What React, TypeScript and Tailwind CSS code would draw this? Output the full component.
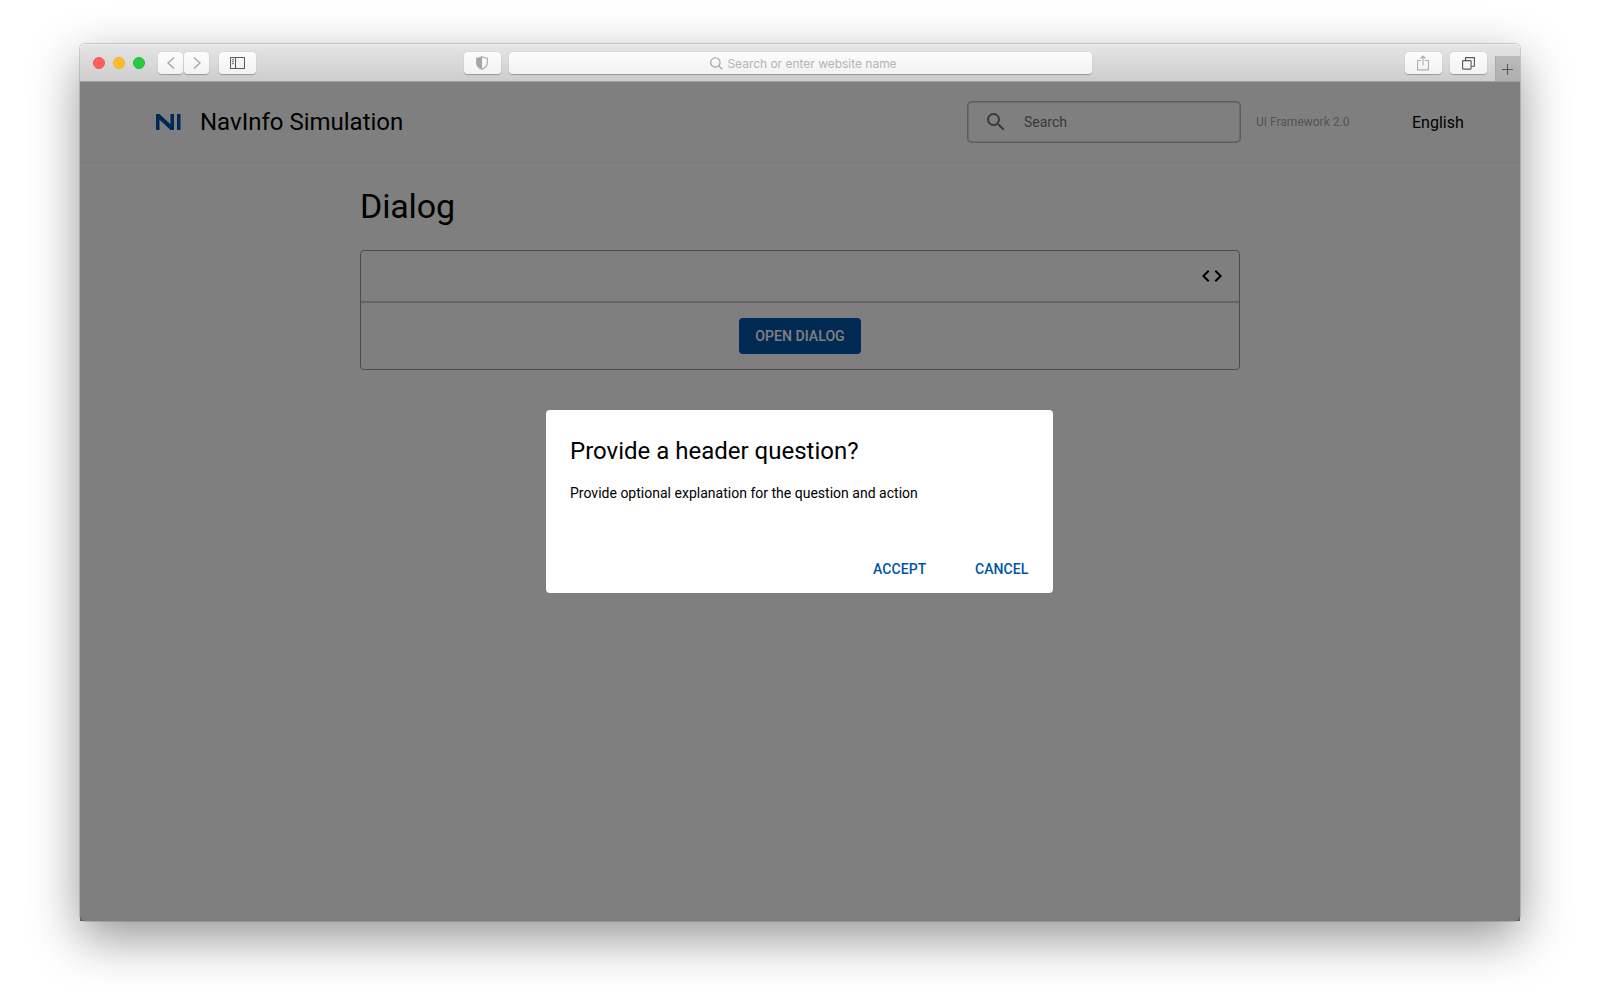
import React from "react";

const toolButton =
  "flex h-[22px] shrink-0 items-center justify-center rounded-[4px] bg-linear-to-b from-[#fdfdfd] to-[#f2f2f2] shadow-[0_0.5px_1px_rgba(0,0,0,0.28)]";

function BrowserBar() {
  return (
    <div className="flex h-[38px] shrink-0 items-start rounded-t-[5px] border-b border-[#a0a0a0] bg-linear-to-b from-[#e6e6e6] to-[#cdcdcd] pt-2 shadow-[inset_0_1px_0_#eeeeee]">
      <div className="ml-[13px] flex h-[22px] items-center gap-2">
        <span className="size-3 rounded-full border-[0.5px] border-[#f2564e] bg-[#ff5f57]" />
        <span className="size-3 rounded-full border-[0.5px] border-[#efb024] bg-[#ffbd2e]" />
        <span className="size-3 rounded-full border-[0.5px] border-[#1fbb35] bg-[#28ca41]" />
      </div>
      <div className="ml-[13px] flex gap-px">
        <div className={`${toolButton} w-[25px]`}>
          <svg width="8" height="12" viewBox="0 0 8 12" fill="none" stroke="#a3a3a3" strokeWidth="1.3">
            <path d="M7 0.5 1 6l6 5.5" />
          </svg>
        </div>
        <div className={`${toolButton} w-[25px]`}>
          <svg width="8" height="12" viewBox="0 0 8 12" fill="none" stroke="#a3a3a3" strokeWidth="1.3">
            <path d="M1 0.5 7 6l-6 5.5" />
          </svg>
        </div>
      </div>
      <div className={`${toolButton} ml-[10px] w-[37px]`}>
        <svg width="15" height="12" viewBox="0 0 15 12" fill="none" stroke="#5c5c5c">
          <rect x="0.5" y="0.5" width="14" height="11" rx="0.5" strokeWidth="1.1" />
          <path d="M5.5 0.5v11" strokeWidth="1.1" />
          <path d="M2 2.7h2M2 4.7h2M2 6.7h2" strokeWidth="0.9" />
        </svg>
      </div>
      <div className={`${toolButton} ml-[208px] w-[37px] pr-px`}>
        <svg width="12" height="14" viewBox="0 0 12 14">
          <path d="M6 .8C4.500 1.800 2.700 2.200.7 2.300V7c0 2.900 2.300 5 5.300 6.300C9 12 11.300 9.900 11.300 7V2.300C9.300 2.200 7.500 1.800 6 .8Z" fill="none" stroke="#a6a6a6" strokeWidth="1.1" />
          <path d="M6 .8C4.500 1.800 2.700 2.200.7 2.300V7c0 2.900 2.300 5 5.300 6.300Z" fill="#a6a6a6" />
        </svg>
      </div>
      <div className={`${toolButton} ml-[7.5px] w-[583px] gap-[4px] pl-[7px] font-['Inter'] text-[12px] text-[#b4b4b4]`}>
        <svg width="13" height="13" viewBox="0 0 13 13" fill="none" stroke="#a0a0a0" strokeWidth="1.1">
          <circle cx="5.400" cy="5.400" r="4.700" />
          <path d="m8.800 8.800 3.700 3.700" />
        </svg>
        <span className="pt-[2px] tracking-[-0.02px]">Search or enter website name</span>
      </div>
      <div className={`${toolButton} ml-auto w-[37px] pr-px`}>
        <svg width="12" height="16" viewBox="0 0 12 16" fill="none" stroke="#b0b0b0" strokeWidth="1.1">
          <path d="M4 5.500H.6v9.400h10.800V5.500H8M6 10.500V1M3.500 3.500 6 1l2.500 2.500" />
        </svg>
      </div>
      <div className={`${toolButton} ml-2 w-[37px] pr-px`}>
        <svg width="13" height="13" viewBox="0 0 13 13" fill="none" stroke="#585858" strokeWidth="1.1">
          <rect x="0.600" y="3.600" width="8.500" height="8.500" rx="0.800" />
          <path d="M3.500 3.500V.6h8.900v8.700H9.300" />
        </svg>
      </div>
      <div className="mt-1 ml-2 flex h-[25px] w-[25px] items-center justify-center border-l border-[#a9a9a9] bg-linear-to-b from-[#bababa] to-[#afafaf] pt-[2px] pr-[2px]">
        <svg width="11" height="11" viewBox="0 0 11 11" stroke="#5a5a5a" strokeWidth="1.1">
          <path d="M5.500 0v11M0 5.500h11" />
        </svg>
      </div>
    </div>
  );
}

function SiteHeader() {
  return (
    <header className="flex h-[81px] shrink-0 items-center border-b border-[#f2f2f2]">
      <svg className="ml-[76px]" width="25" height="17" viewBox="0 0 25 17" fill="#0054a6">
        <path d="M0 0h3.500l11 10.300V0H18v16h-3.500L3.500 5.700V16H0ZM21 0h3.500v16H21Z" />
      </svg>
      <span className="ml-[19px] text-2xl">NavInfo Simulation</span>
      <div className="ml-auto flex h-[42px] w-[274px] items-center rounded-[5px] shadow-[inset_0_0_0_1.5px_#b8b8b8] pl-[17px]">
        <svg width="24" height="24" viewBox="0 0 24 24" fill="#757575">
          <path d="M15.500 14h-.79l-.28-.27A6.471 6.471 0 0 0 16 9.500 6.500 6.500 0 1 0 9.500 16c1.610 0 3.090-.59 4.230-1.570l.27.28v.79l5 4.990L20.490 19l-4.990-5zm-6 0C7.010 14 5 11.990 5 9.500S7.010 5 9.500 5 14 7.010 14 9.500 11.990 14 9.500 14z" />
        </svg>
        <span className="ml-4 text-sm text-[#757575]">Search</span>
      </div>
      <span className="ml-[15px] w-[94px] whitespace-nowrap text-xs text-[#a8a8a8]">UI Framework 2.0</span>
      <span className="mr-[55px] ml-[62px] w-[53px] pt-[2px] text-base">English</span>
    </header>
  );
}

function DemoCard() {
  return (
    <section className="mx-auto w-[880px]">
      <h1 className="mt-[21px] h-[44px] text-[34px] leading-[44px] tracking-[-0.15px]">Dialog</h1>
      <div className="mt-[22px] h-[120px] rounded-[4px] border border-[#989898]">
        <div className="flex h-[52px] items-center justify-end border-b-2 border-[#cccccc] pr-[15px]">
          <svg className="mt-[-1px]" width="24" height="24" viewBox="0 0 24 24">
            <path d="M9.400 16.600 4.800 12l4.600-4.600L8 6l-6 6 6 6 1.400-1.400zm5.200 0 4.600-4.600-4.600-4.600L16 6l6 6-6 6-1.400-1.400z" />
          </svg>
        </div>
        <div className="flex justify-center pt-[15px]">
          <button className="h-9 w-[122px] rounded-[4px] bg-[#0054a6] text-sm font-medium tracking-[0.06px] text-white">OPEN DIALOG</button>
        </div>
      </div>
    </section>
  );
}

function Dialog() {
  return (
    <div className="absolute inset-0 flex justify-center bg-black/50 pr-[2px]">
      <div role="dialog" className="mt-[328px] flex h-[183px] w-[507px] flex-col rounded-[4px] bg-white px-6">
        <h2 className="mt-[25px] pl-[0.5px] text-2xl leading-8">Provide a header question?</h2>
        <p className="mt-4 pl-[0.5px] text-sm leading-5 tracking-[0.01px]">Provide optional explanation for the question and action</p>
        <div className="mt-auto mb-[14px] flex justify-end gap-[48.5px] text-sm font-medium text-[#0054a6]">
          <button className="tracking-[0.1px]">ACCEPT</button>
          <button className="tracking-[0.1px]">CANCEL</button>
        </div>
      </div>
    </div>
  );
}

export default function App() {
  return (
    <div className="h-[1000px] w-[1600px] overflow-hidden bg-white pt-[44px] font-['Roboto',sans-serif] text-black">
      <div className="mx-auto flex h-[877px] w-[1440px] flex-col rounded-[5px] bg-white shadow-[0_0_0_1px_rgba(0,0,0,0.15),0_17px_50px_rgba(0,0,0,0.42)]">
        <BrowserBar />
        <main className="relative flex-1">
          <SiteHeader />
          <DemoCard />
          <Dialog />
        </main>
      </div>
    </div>
  );
}
